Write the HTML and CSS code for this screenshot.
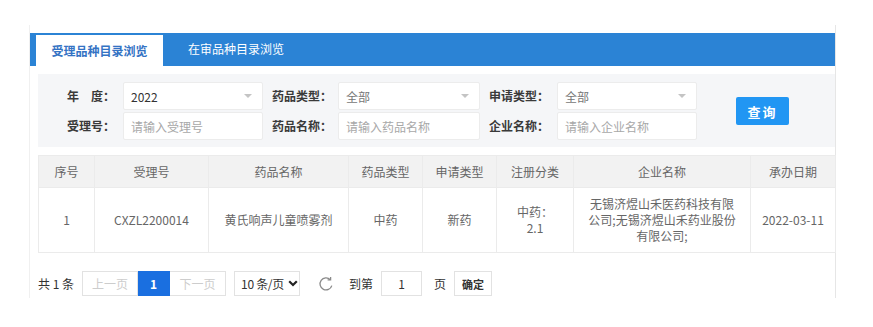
FILE: index.html
```html
<!DOCTYPE html>
<html lang="zh-CN">
  <head>
    <meta charset="UTF-8" />
    <meta name="viewport" content="width=device-width, initial-scale=1.0" />
    <title>品种目录浏览</title>
    <link rel="stylesheet" href="styles.css">
  </head>
  <body>
    <div class="wrap">
      <div class="tabs">
        <div class="tab active">受理品种目录浏览</div>
        <div class="tab">在审品种目录浏览</div>
      </div>

      <div class="search">
        <div class="fields">
          <label>年　度：</label>
          <div class="select"><span class="value">2022</span><i class="caret"></i></div>
          <label class="mid">药品类型：</label>
          <div class="select wide"><span class="value light">全部</span><i class="caret"></i></div>
          <label>申请类型：</label>
          <div class="select"><span class="value light">全部</span><i class="caret"></i></div>

          <label>受理号：</label>
          <input type="text" placeholder="请输入受理号" />
          <label class="mid">药品名称：</label>
          <input type="text" class="wide" placeholder="请输入药品名称" />
          <label>企业名称：</label>
          <input type="text" placeholder="请输入企业名称" />
        </div>
        <button type="button" class="btn-query">查询</button>
      </div>

      <table class="grid">
        <colgroup>
          <col class="c1" />
          <col class="c2" />
          <col class="c3" />
          <col class="c4" />
          <col class="c5" />
          <col class="c6" />
          <col class="c7" />
          <col class="c8" />
        </colgroup>
        <thead>
          <tr>
            <th>序号</th>
            <th>受理号</th>
            <th>药品名称</th>
            <th>药品类型</th>
            <th>申请类型</th>
            <th>注册分类</th>
            <th>企业名称</th>
            <th>承办日期</th>
          </tr>
        </thead>
        <tbody>
          <tr>
            <td>1</td>
            <td>CXZL2200014</td>
            <td>黄氏响声儿童喷雾剂</td>
            <td>中药</td>
            <td>新药</td>
            <td>中药：2.1</td>
            <td>无锡济煜山禾医药科技有限公司;无锡济煜山禾药业股份有限公司;</td>
            <td class="nowrap">2022-03-11</td>
          </tr>
        </tbody>
      </table>

      <div class="pager">
        <span class="total">共 1 条</span>
        <div class="pages">
          <span class="page disabled">上一页</span>
          <span class="page current">1</span>
          <span class="page disabled">下一页</span>
        </div>
        <div class="limit">
          <span>10 条/页</span>
          <svg width="10" height="7" viewBox="0 0 10 7"><polyline points="1.2,1.2 5,5 8.8,1.2" fill="none" stroke="#222" stroke-width="2.2" /></svg>
        </div>
        <svg class="refresh" width="16" height="16" viewBox="0 0 16 16">
          <path d="M12.3 3.7A6 6 0 1 0 13.8 9.6" fill="none" stroke="#8a8a8a" stroke-width="1.3" />
          <path d="M9.6 3.9H12.6V0.9" fill="none" stroke="#8a8a8a" stroke-width="1.3" />
        </svg>
        <span class="skip">到第</span>
        <input type="text" class="jump" value="1" />
        <span class="unit">页</span>
        <button type="button" class="btn-ok">确定</button>
      </div>
    </div>
  </body>
</html>
```

FILE: styles.css
```css
body {
  margin: 0;
  font-family: "Noto Sans CJK SC", "Noto Sans", sans-serif;
  font-size: 12px;
  color: #333;
  background: #fff;
}
.wrap {
  margin: 25px 0 0 29px;
  width: 805px;
  padding: 8px 0 2px 0;
  border-left: 1px solid #f0f0f0;
  border-right: 1px solid #e6e6e6;
}
.tabs {
  display: flex;
  height: 33px;
  background: #2b83d5;
}
.tab {
  line-height: 31px;
  color: #fff;
  font-size: 12px;
  padding: 0 25px;
}
.tab.active {
  margin: 2px 0 0 6px;
  width: 127px;
  padding: 0;
  text-align: center;
  background: #fff;
  color: #3473c4;
  font-weight: bold;
}
.search {
  display: flex;
  align-items: center;
  margin: 8px 0 0 8px;
  padding: 8px 0 7px 0;
  background: #f5f6f8;
}
.fields {
  display: grid;
  grid-template-columns: 85px 140px 75px 142px 77px 140px;
  row-gap: 2px;
}
.fields label {
  line-height: 28px;
  text-align: right;
  padding-right: 8px;
  color: #3a3a3a;
  font-weight: bold;
}
.fields label.mid {
  padding-right: 6px;
}
.select,
.fields input {
  box-sizing: border-box;
  height: 28px;
  border: 1px solid #ececec;
  background: #fff;
  border-radius: 2px;
}
.select {
  display: flex;
  align-items: center;
  justify-content: space-between;
  padding: 0 10px 0 7px;
}
.value {
  color: #333;
}
.value.light {
  color: #777;
}
.caret {
  width: 0;
  height: 0;
  border-left: 4px solid transparent;
  border-right: 4px solid transparent;
  border-top: 4px solid #c4c4c4;
}
.fields input {
  padding: 0 7px;
  font: inherit;
  color: #333;
  outline: none;
}
.fields input::placeholder {
  color: #a8a8a8;
}
.btn-query {
  margin-left: 39px;
  width: 53px;
  height: 28px;
  border: none;
  border-radius: 2px;
  background: #2196f3;
  color: #fff;
  font: inherit;
  font-size: 13px;
  font-weight: bold;
  letter-spacing: 2px;
  cursor: pointer;
}
.grid {
  margin: 8px 0 0 8px;
  width: 797px;
  border-collapse: collapse;
  table-layout: fixed;
  color: #666;
}
.grid th,
.grid td {
  border: 1px solid #ebebeb;
  text-align: center;
  padding: 0 12px;
  font-weight: normal;
  line-height: 16px;
}
.grid th {
  height: 31px;
  background: #f2f2f2;
}
.grid td {
  height: 64px;
}
.grid td.nowrap {
  white-space: nowrap;
  padding: 0 4px;
}
.c1 { width: 56px; }
.c2 { width: 114px; }
.c3 { width: 140px; }
.c4 { width: 74px; }
.c5 { width: 74px; }
.c6 { width: 77px; }
.c7 { width: 177px; }
.c8 { width: 85px; }
.pager {
  display: flex;
  align-items: center;
  margin: 18px 0 0 8px;
  height: 25px;
  color: #333;
}
.total {
  margin-right: 8px;
}
.pages {
  display: flex;
  height: 25px;
}
.page {
  box-sizing: border-box;
  width: 56px;
  line-height: 23px;
  text-align: center;
  border: 1px solid #e2e2e2;
}
.page + .page {
  border-left: none;
}
.page.disabled {
  color: #cdcdcd;
}
.page.current {
  width: 32px;
  background: #1a6fe0;
  border-color: #1a6fe0;
  color: #fff;
  font-weight: bold;
}
.limit {
  box-sizing: border-box;
  display: flex;
  align-items: center;
  gap: 4px;
  margin-left: 8px;
  width: 66px;
  height: 25px;
  padding-left: 6px;
  border: 1px solid #e2e2e2;
  white-space: nowrap;
  letter-spacing: -0.3px;
}
.refresh {
  margin-left: 18px;
}
.skip {
  margin-left: 15px;
}
.jump {
  box-sizing: border-box;
  margin-left: 8px;
  width: 41px;
  height: 25px;
  border: 1px solid #e2e2e2;
  text-align: center;
  font: inherit;
  color: #333;
  outline: none;
}
.unit {
  margin-left: 12px;
}
.btn-ok {
  margin-left: 8px;
  width: 38px;
  height: 25px;
  border: 1px solid #e2e2e2;
  background: #fff;
  font: inherit;
  font-size: 11px;
  font-weight: bold;
  color: #333;
  padding: 0;
}
```
